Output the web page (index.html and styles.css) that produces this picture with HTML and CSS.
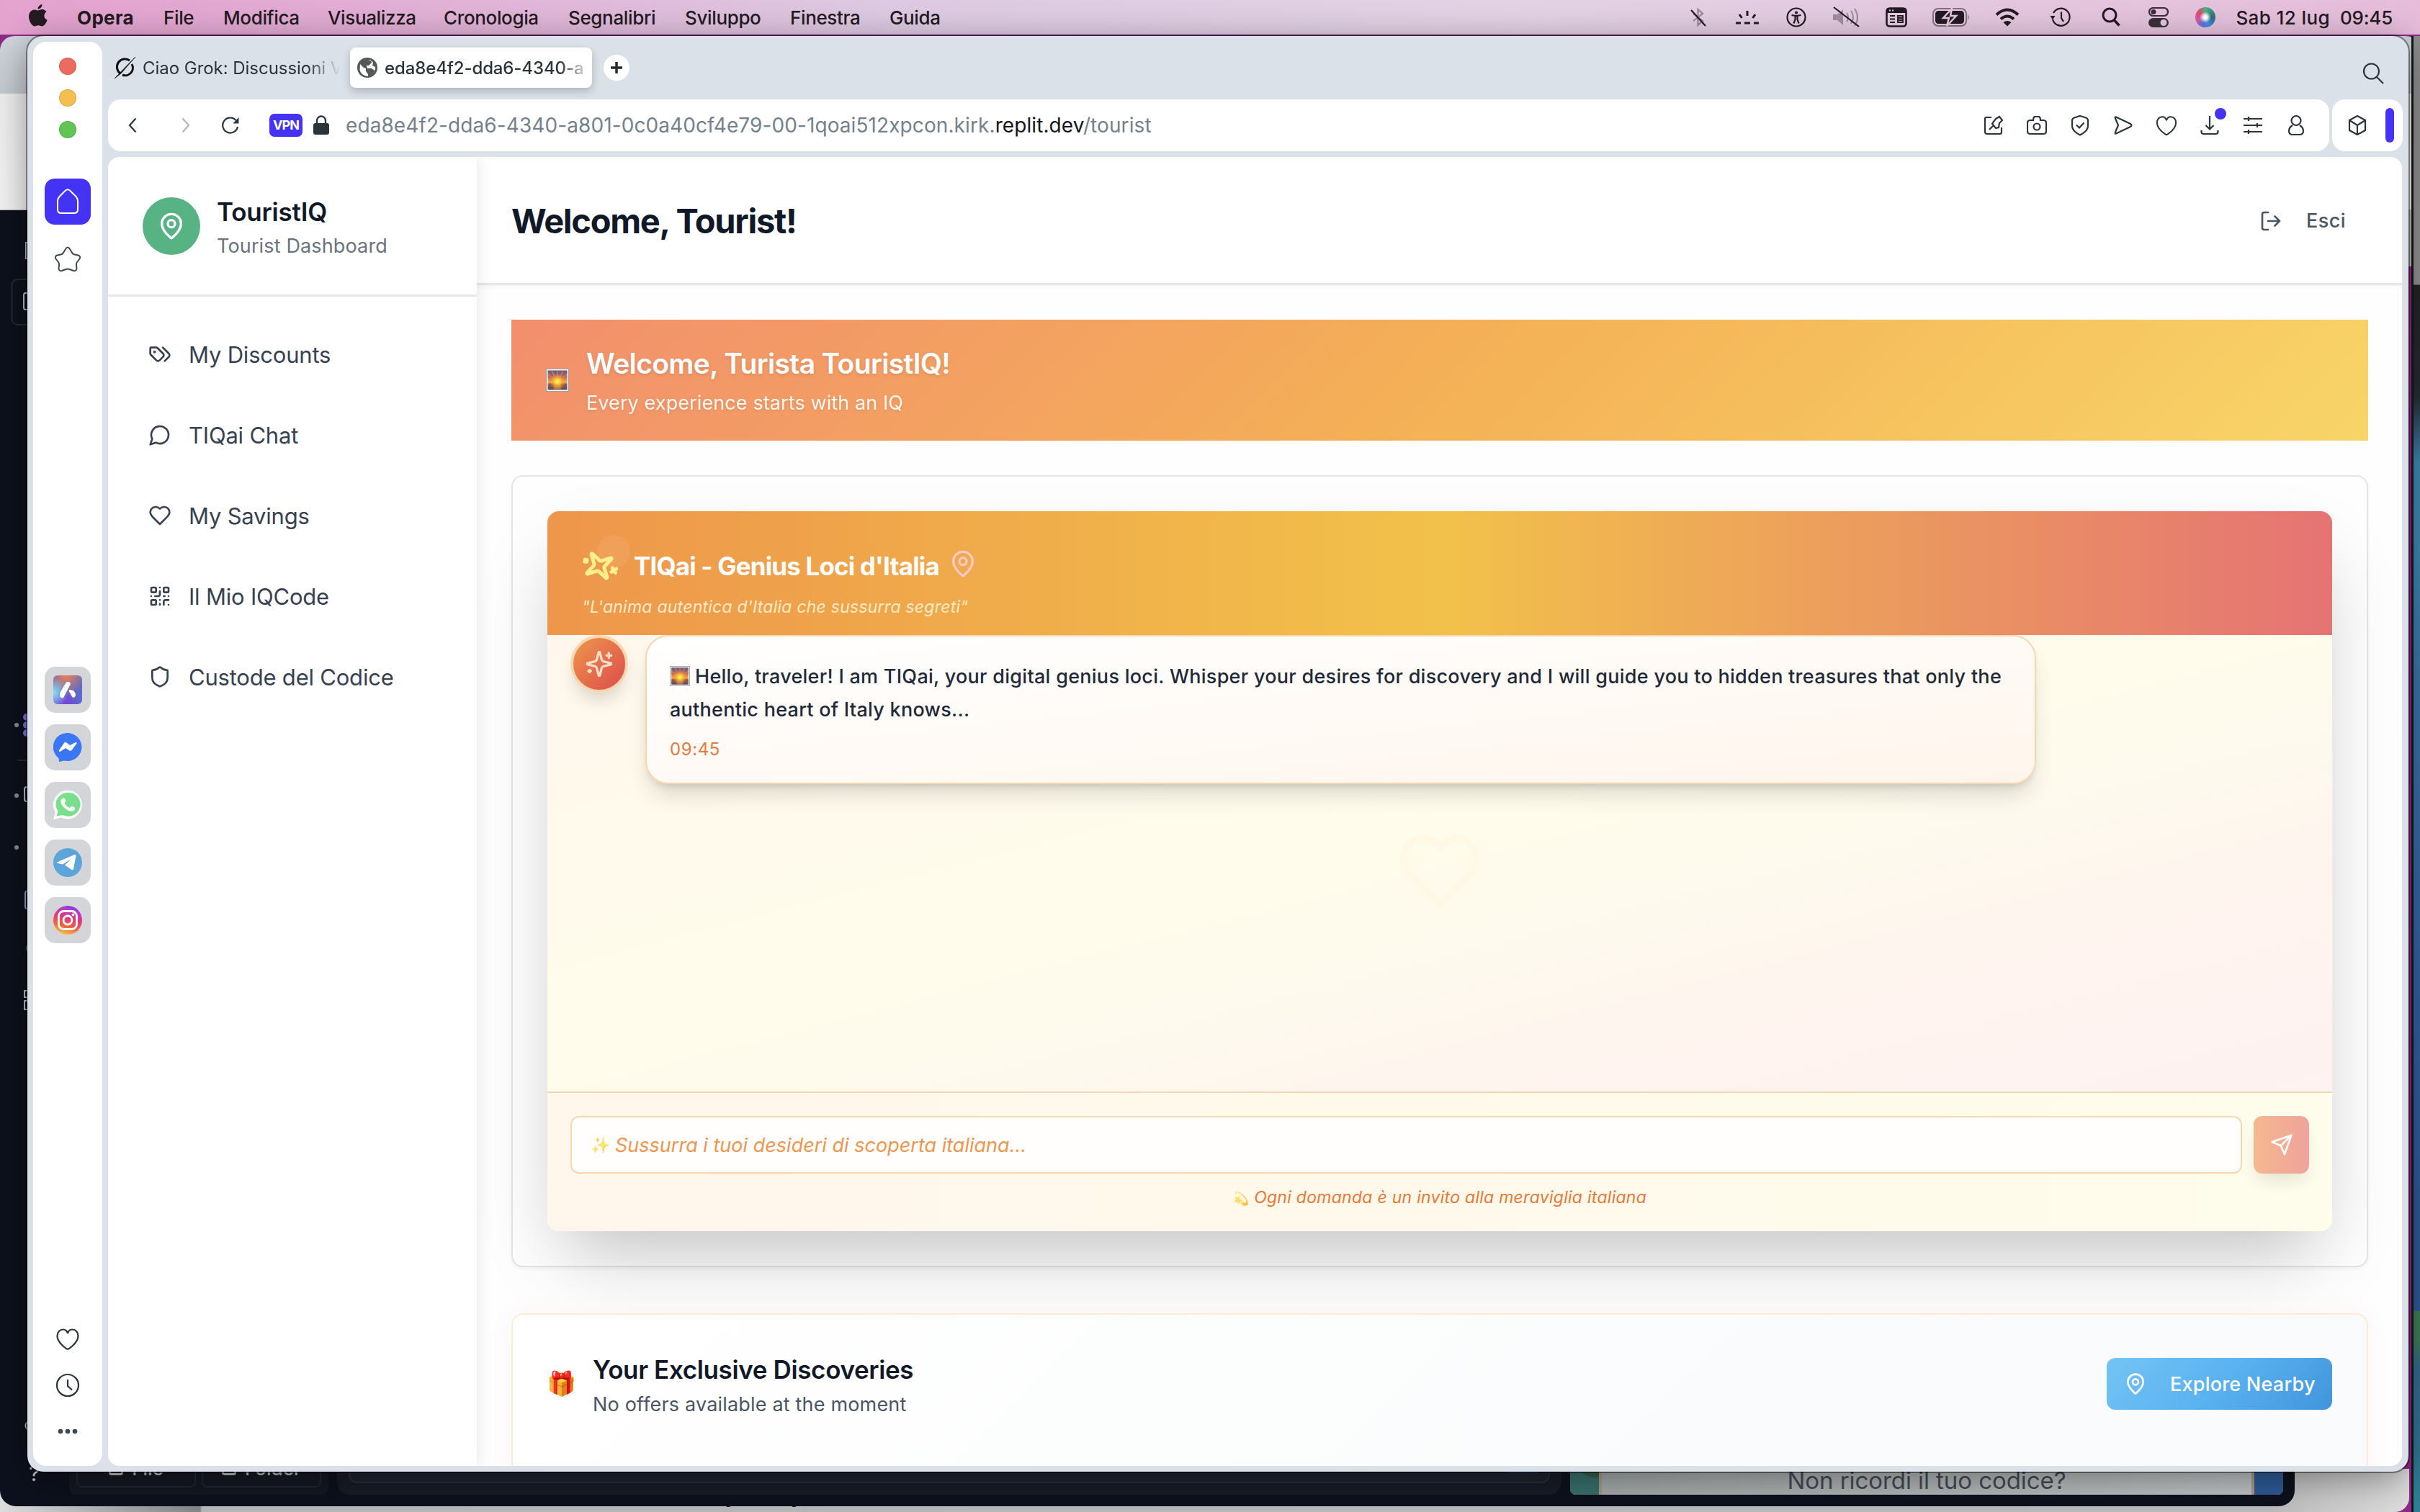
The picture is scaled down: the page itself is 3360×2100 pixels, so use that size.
FILE: index.html
```html
<!DOCTYPE html>
<html lang="it">
<head>
<meta charset="utf-8">
<title>TouristIQ</title>
<link rel="stylesheet" href="styles.css">
</head>
<body>
<svg class="defs" width="0" height="0">
  <defs>
    <symbol id="pin" viewBox="0 0 24 24"><path d="M20 10c0 4.99-5.54 10.19-7.4 11.8a1 1 0 0 1-1.2 0C9.54 20.19 4 14.99 4 10a8 8 0 0 1 16 0"/><circle cx="12" cy="10" r="3"/></symbol>
    <symbol id="heart" viewBox="0 0 24 24"><path d="M19 14c1.49-1.46 3-3.21 3-5.5A5.5 5.5 0 0 0 16.5 3c-1.76 0-3 .5-4.5 2-1.5-1.5-2.74-2-4.5-2A5.5 5.5 0 0 0 2 8.5c0 2.3 1.5 4.05 3 5.5l7 7Z"/></symbol>
    <symbol id="sparkles" viewBox="0 0 24 24"><path d="M9.937 15.5A2 2 0 0 0 8.5 14.063l-6.135-1.582a.5.5 0 0 1 0-.962L8.5 9.936A2 2 0 0 0 9.937 8.5l1.582-6.135a.5.5 0 0 1 .963 0L14.063 8.5A2 2 0 0 0 15.5 9.937l6.135 1.581a.5.5 0 0 1 0 .964L15.5 14.063a2 2 0 0 0-1.437 1.437l-1.582 6.135a.5.5 0 0 1-.963 0z"/><path d="M20 3v4M22 5h-4M4 17v2M5 18H3"/></symbol>
    <symbol id="opheart" viewBox="0 0 32 32"><path d="M16 8C15 4 12.500 2.500 9.500 2.500C5 2.500 1.500 6 1.500 11.500C1.500 18 8 25 14.500 29.300Q16 30.200 17.500 29.300C24 25 30.500 18 30.500 11.500C30.500 6 27 2.500 22.500 2.500C19.500 2.500 17 4 16 8z"/></symbol>
    <linearGradient id="sky" x1="0" y1="0" x2="0" y2="1"><stop offset="0" stop-color="#5d5a86"/><stop offset=".35" stop-color="#c0685a"/><stop offset=".6" stop-color="#f5a742"/><stop offset=".64" stop-color="#e39a3c"/><stop offset=".7" stop-color="#9a5a48"/><stop offset="1" stop-color="#5b4a58"/></linearGradient>
    <radialGradient id="sun" cx=".5" cy=".58" r=".42"><stop offset="0" stop-color="#fff46a"/><stop offset=".3" stop-color="#ffd63f" stop-opacity=".95"/><stop offset="1" stop-color="#f58c33" stop-opacity="0"/></radialGradient>
    <symbol id="sunrise" viewBox="0 0 32 32"><rect x=".5" y=".5" width="31" height="31" fill="#fff" stroke="#9aa0a4"/><rect x="2.500" y="2.500" width="27" height="27" fill="url(#sky)"/><path d="M16 18L3 8M16 18L8 3M16 18V3M16 18L24 3M16 18L29 8M16 18L3 14M16 18L29 14" stroke="#f0903c" stroke-width="1.200" opacity=".7"/><rect x="2.500" y="2.500" width="27" height="27" fill="url(#sun)"/><path d="M11 29.500V21h10v8.500z" fill="#f0a03c" opacity=".4"/></symbol>
    <linearGradient id="ig" x1=".3" y1="1" x2=".6" y2="0"><stop offset="0" stop-color="#fbc84c"/><stop offset=".3" stop-color="#f0663c"/><stop offset=".6" stop-color="#e0367c"/><stop offset=".85" stop-color="#b83ad0"/><stop offset="1" stop-color="#7a3cf0"/></linearGradient>
  </defs>
</svg>

<div class="desktop">
  <header class="menubar">
    <nav class="menus">
      <svg class="apple" width="26" height="32" viewBox="0 0 26 32"><path fill="#231a22" d="M18.500 0c.3 3-2.600 6.800-5.900 6.700C12.300 3.600 15.300.5 18.500 0zM13 8.600c1.200 0 3-1.500 5.700-1.500 2.400 0 4.600 1.300 5.900 3.200-4.800 2.900-4 9.500 1 11.500-1.200 3.600-4.200 8.700-7.300 8.700-2 0-2.700-1.200-5.100-1.200s-3.300 1.200-5.100 1.200C4.700 30.500 0 23.500 0 17.300 0 11 4 7.500 7.600 7.500c2.400 0 4 1.100 5.400 1.100z"/></svg>
      <b>Opera</b><span>File</span><span>Modifica</span><span>Visualizza</span><span>Cronologia</span><span>Segnalibri</span><span>Sviluppo</span><span>Finestra</span><span>Guida</span>
    </nav>
    <div class="status">
      <svg class="i" width="28" height="28" viewBox="0 0 28 28"><path d="M7 9l13 10-6.500 6V3L20 9 7 19" opacity=".4"/><path d="M4 4l20 22"/></svg>
      <svg class="i" width="34" height="28" viewBox="0 0 34 28"><path stroke-width="3" d="M1 22h7M13 22h8M26 22h7M17 5v7M6 10l3.500 5M28 10l-3.500 5"/></svg>
      <svg class="i" width="28" height="28" viewBox="0 0 28 28"><circle cx="14" cy="14" r="12.500"/><circle cx="14" cy="7.500" r="1" fill="#231a22"/><path d="M7.500 11l6.500 1.200 6.500-1.200M12.500 12v5l-2 5.500M15.500 12v5l2 5.500"/></svg>
      <svg class="i" width="38" height="30" viewBox="0 0 38 30"><path d="M1 11h6l8-7v22l-8-7H1z" fill="#231a22" stroke="none" opacity=".35"/><path d="M20 9q4 6 0 12M26 6q6 9 0 18M31 3q8 12 0 24" opacity=".35"/><path d="M2 1l35 27"/></svg>
      <svg width="30" height="28" viewBox="0 0 30 28"><rect x="1.500" y="1.500" width="27" height="25" rx="4" fill="none" stroke="#231a22" stroke-width="2.600"/><path d="M1 8V4q0-3 3-3h22q3 0 3 3v4z" fill="#231a22"/><path d="M6 12h7M6 16.500h7M6 21h7M17 12h7v9h-7zM17 15h7M17 18h7" fill="none" stroke="#231a22" stroke-width="1.800"/><path d="M5 4.500h2M9 4.500h2" stroke="#e5c8de" stroke-width="2"/></svg>
      <svg width="52" height="26" viewBox="0 0 52 26"><rect x="1" y="1" width="46" height="24" rx="7" fill="none" stroke="#231a22" stroke-width="2" opacity=".5"/><rect x="4" y="4" width="40" height="18" rx="4.500" fill="#231a22"/><path d="M49 9q3 4 0 8" fill="#231a22" opacity=".5"/><path d="M27 1L15 14h8l-3 11 13-14h-8z" fill="#231a22" stroke="#e5c8de" stroke-width="2.500"/></svg>
      <svg width="34" height="26" viewBox="0 0 34 26"><path d="M2 9.500q15-14 30 0M8 15.500q9-8 18 0" fill="none" stroke="#231a22" stroke-width="4"/><path d="M11.500 20q5.500-4 11 0L17 25.500z" fill="#231a22"/></svg>
      <svg class="i" width="30" height="28" viewBox="0 0 30 28"><path d="M4 17A12 12 0 1 0 5 8"/><path d="M16 6.500V15l3 5"/><path d="M.5 12h7L4 17.500z" fill="#231a22" stroke="none"/></svg>
      <svg class="i" width="28" height="28" viewBox="0 0 28 28"><circle cx="12" cy="11" r="9" stroke-width="3"/><path stroke-width="3.500" d="M18.500 18l7 7.500"/></svg>
      <svg width="28" height="28" viewBox="0 0 28 28"><rect x="1" y="1" width="26" height="11" rx="5.500" fill="none" stroke="#3b2f3a" stroke-width="2.200"/><circle cx="7" cy="6.500" r="3.500" fill="#3b2f3a"/><rect y="15" width="28" height="13" rx="6.500" fill="#3b2f3a"/><circle cx="21" cy="21.500" r="4.500" fill="#e5c8de"/></svg>
      <i class="siri"></i>
      <span>Sab 12 lug</span><span class="clock">09:45</span>
    </div>
  </header>

  <div class="behind"></div>
  <section class="ide">
    <svg class="ide-rail" width="38" height="1800" viewBox="0 0 38 1800" fill="none" stroke="#b9bcc4" stroke-width="2">
      <path d="M38 45h-2v22h2M38 115h-3q-2 0-2 3v17q0 3 2 3h3" /><rect x="16.500" y="96" width="40" height="63" rx="8" stroke="#262a38"/>
      <g fill="#8a8c94" stroke="none"><circle cx="23" cy="715" r="3"/><circle cx="23" cy="813" r="3"/><circle cx="23" cy="885" r="3"/></g>
      <g fill="#7a6fd0" stroke="none"><circle cx="37" cy="704" r="5"/><circle cx="37" cy="715" r="5"/><circle cx="37" cy="726" r="5"/></g>
      <path d="M24 764h14" stroke="#262a38"/><path d="M40 801h-3q-3 0-3 3v14q0 3 3 3h3"/><path d="M40 946h-3q-2 0-2 3v18q0 3 2 3h3" stroke="#86a0c8"/><circle cx="43" cy="1025" r="6" stroke="#4f9a5c"/><path d="M38 1084h-4v9h4M38 1098h-4v12h4M38 1683q-5 5 0 10"/>
    </svg>
    <div class="ide-foot">
      <span class="help">?</span>
      <div class="drop"><div class="drop-btn"><i></i>File</div><div class="drop-btn"><i></i>Folder</div></div>
      <div class="prompt"><div class="prompt-box"><i></i></div></div>
      <div class="preview"><i class="land"></i><p>Non ricordi il tuo codice?</p><i class="sea"></i></div>
    </div>
  </section>
  <div class="under"><span>(</span><span>)</span></div>
  <div class="edge"></div>

  <main class="opera">
    <aside class="rail">
      <div class="lights"><i class="red"></i><i class="yellow"></i><i class="green"></i></div>
      <div class="home"><svg width="32" height="36" viewBox="0 0 32 36"><path d="M2 17.500Q2 14 4.500 11L13 2.500q3-2.500 6 0L27.500 11Q30 14 30 17.500V29q0 5-5 5H7q-5 0-5-5z" fill="none" stroke="#fff" stroke-width="2"/></svg></div>
      <svg class="star" width="38" height="36" viewBox="0 0 38 36" fill="none" stroke="#3f484f" stroke-width="2"><path d="M16 4q3-5 6 0l3 5q1 2 3.500 2.500l5 1q4 1.500 2 5L32 22q-1.500 2-1 4l.5 5q-.5 4-4.500 3l-5.500-2q-2.500-1-5 0L11 34q-4 1-4.500-3l.5-5q.5-2-1-4l-3.500-4.500q-2-3.500 2-5l5-1Q12 11 13 9z"/></svg>
      <div class="apps">
        <div class="app"><i class="aria"><svg width="40" height="40" viewBox="0 0 40 40"><path d="M20 9q4 0 4 3L14 31q-2 2-5-2V25L17 11q1-2 3-2zM23 20q7 0 8 7 0 3-3 4-2 0-3-3-1-3-3-5-1-3 1-3z" fill="#fff"/></svg></i></div>
        <div class="app"><svg width="40" height="40" viewBox="0 0 40 40"><path d="M20 0a20 19.500 0 1 1-5 38.500L8 40l-.5-5A19.500 19.500 0 0 1 20 0z" fill="#3b76f6"/><path d="M8 24l7-10q1.500-2 3.500-.5L23 17l8-4q2-.5 1.500 1.500l-6.500 9q-1.500 2-3.500 1L17 21l-7.500 5q-2 .5-1.500-2z" fill="#fff"/></svg></div>
        <div class="app"><svg width="40" height="40" viewBox="0 0 40 40"><path d="M0 40l2.800-10A20 20 0 1 1 11 37.500z" fill="#fff"/><path d="M4.500 35.500l2-7A17 16.500 0 1 1 13 34z" fill="#78e08a"/><path d="M13 10.500q3-1 4 2.500.8 2-.8 3.500-1 1 .3 2.500 2.500 3.500 5.500 4.800 1.200.4 2.200-1 1-1.600 3-.6 3 1.200 3 2 0 3.800-4.500 4.600Q20 29 14 22.500 7 14 13 10.500z" fill="#fff"/></svg></div>
        <div class="app"><svg width="40" height="40" viewBox="0 0 40 40"><circle cx="20" cy="20" r="20" fill="#5ca5da"/><path d="M5 19.500L29.500 9q2-.5 2 1.500L28 29q-.5 2-2.500 1L16 23.500 25 15l-12 7.500-7-1.500q-2-.7-1-1.500z" fill="#fff"/></svg></div>
        <div class="app"><svg width="40" height="40" viewBox="0 0 40 40"><circle cx="20" cy="20" r="20" fill="url(#ig)"/><g fill="none" stroke="#fff" stroke-width="2.800"><rect x="7.500" y="7.500" width="25" height="25" rx="7"/><circle cx="20" cy="20" r="6"/></g><circle cx="27.500" cy="12.500" r="1.900" fill="#fff"/></svg></div>
      </div>
      <div class="rail-foot">
        <svg class="o" width="34" height="32"><use href="#opheart"/></svg>
        <svg class="o" width="34" height="34" viewBox="0 0 34 34"><circle cx="17" cy="17" r="15"/><path d="M17 9v9l6 5.500"/></svg>
        <svg width="28" height="8" viewBox="0 0 28 8" fill="#3f484f"><circle cx="4" cy="4" r="3.300"/><circle cx="14" cy="4" r="3.300"/><circle cx="24" cy="4" r="3.300"/></svg>
      </div>
    </aside>

    <div class="browser">
      <div class="tabs">
        <div class="tab"><svg width="32" height="32" viewBox="0 0 32 32" fill="none" stroke="#111" stroke-width="3"><path d="M9 24A10.500 10.500 0 0 1 22 6M25 11a10.500 10.500 0 0 1-13 15"/><path d="M1 31L30 1 10 24z" fill="#111" stroke-width=".8"/></svg><span>Ciao Grok: Discussioni Varie</span></div>
        <div class="tab active"><svg width="28" height="28" viewBox="0 0 28 28"><circle cx="14" cy="14" r="14" fill="#54585b"/><path d="M4 9l5 5 3 1v4l3 4v3Q5 25 3.500 17zM13 3h6l1 4-4 4h-3l1 4h6l4 3-2 4q4-6 3-9l-4-2 1-4Q20 3 13 3z" fill="#fff"/></svg><span>eda8e4f2-dda6-4340-a801</span></div>
        <div class="newtab"><svg width="18" height="18" viewBox="0 0 18 18"><path d="M9 1v16M1 9h16" stroke="#222a30" stroke-width="3.500"/></svg></div>
        <svg class="tabsearch o" width="30" height="30" viewBox="0 0 30 30"><circle cx="12.500" cy="12" r="10.500"/><path d="M20 20l9 9"/></svg>
      </div>
      <div class="bar">
        <div class="address">
          <svg class="o back" width="12" height="22" viewBox="0 0 12 22"><path d="M10.500 1.500L2 11l8.500 9.500"/></svg>
          <svg class="o fwd" width="12" height="22" viewBox="0 0 12 22"><path d="M1.500 1.500L10 11l-8.500 9.500"/></svg>
          <svg class="o" width="26" height="24" viewBox="0 0 26 24"><path d="M23 14a10.500 10.500 0 1 1-3-9.500L23 7"/><path d="M24.500 1v8.500h-8z" fill="#2b3439" stroke="none"/></svg>
          <b class="vpn">VPN</b>
          <svg width="22" height="28" viewBox="0 0 22 28"><rect y="11" width="22" height="16" rx="3" fill="#2b3439"/><path d="M5 12V7.500a6 6 0 0 1 12 0V12" fill="none" stroke="#2b3439" stroke-width="2.400"/></svg>
          <p class="url">eda8e4f2-dda6-4340-a801-0c0a40cf4e79-00-1qoai512xpcon.kirk.<span>replit.dev</span>/tourist</p>
          <div class="tools">
            <svg class="o" width="28" height="28" viewBox="0 0 28 28"><path d="M11 3H4Q2 3 2 5v18q0 3 3 3h18q2 0 2-3v-6"/><path d="M8 20l5-5M17 5l5-3 4 5-4 4-1 6-4 1-5-6 2-3z"/></svg>
            <svg class="o" width="28" height="28" viewBox="0 0 28 28"><path d="M9 7q0-4 2-5h6q2 1 2 5h4q4 0 4 4v11q0 4-4 4H5q-4 0-4-4V11q0-4 4-4z"/><circle cx="14" cy="16" r="4.500"/></svg>
            <svg class="o" width="28" height="30" viewBox="0 0 28 30"><path d="M14 2l8 2.500q3 1 3 4V16q0 7-11 12.500Q3 23 3 16V8.500q0-3 3-4z"/><path d="M9 14.500l4 4 6.500-7"/></svg>
            <svg class="o" width="28" height="28" viewBox="0 0 28 28"><path d="M4 2.500l20 9.500q3 2 0 4L4 25.500q-2 .5-1-2L7 14 3 4.500q-1-2.500 1-2z"/></svg>
            <svg class="o" width="30" height="29"><use href="#opheart"/></svg>
            <div class="dl"><svg class="o" width="28" height="28" viewBox="0 0 28 28"><path d="M14 1v18M8.500 14l5.500 5.500 5.500-5.500M2.500 21v2q0 3 3 3h17q3 0 3-3v-2"/></svg><i></i></div>
            <svg class="o" width="28" height="28" viewBox="0 0 28 28"><path d="M1 5h26M1 14h26M1 23h26M8 2v6M20 11v6M8 20v6"/></svg>
            <svg class="o" width="28" height="30" viewBox="0 0 28 30"><circle cx="14" cy="8.500" r="6.500"/><path d="M9 15q-5 3-5 8 0 4 4 5h12q4-1 4-5 0-5-5-8"/></svg>
          </div>
        </div>
        <div class="ext"><svg class="o" width="26" height="30" viewBox="0 0 26 30"><path d="M13 2l11 6v14l-11 6-11-6V8zM2 8l11 7 11-7M13 15v13"/></svg><i></i></div>
      </div>

      <div class="page">
        <aside class="side">
          <div class="brand">
            <div class="logo"><svg class="l" width="40" height="40"><use href="#pin"/></svg></div>
            <div><h2>TouristIQ</h2><p>Tourist Dashboard</p></div>
          </div>
          <nav class="nav">
            <a><svg class="l" width="32" height="32" viewBox="0 0 24 24"><path d="m15 5 6.300 6.300a2.400 2.400 0 0 1 0 3.400L17 19"/><path d="M9.586 5.586A2 2 0 0 0 8.172 5H3a1 1 0 0 0-1 1v5.172a2 2 0 0 0 .586 1.414L8.290 18.290a2.426 2.426 0 0 0 3.420 0l3.580-3.580a2.426 2.426 0 0 0 0-3.420z"/><circle cx="6.500" cy="9.500" r=".5" fill="currentColor"/></svg>My Discounts</a>
            <a><svg class="l" width="32" height="32" viewBox="0 0 24 24"><path d="M7.900 20A9 9 0 1 0 4 16.100L2 22Z"/></svg>TIQai Chat</a>
            <a><svg class="l" width="32" height="32"><use href="#heart"/></svg>My Savings</a>
            <a><svg class="l" width="32" height="32" viewBox="0 0 24 24"><rect width="5" height="5" x="3" y="3" rx="1"/><rect width="5" height="5" x="16" y="3" rx="1"/><rect width="5" height="5" x="3" y="16" rx="1"/><path d="M21 16h-3a2 2 0 0 0-2 2v3M21 21v.01M12 7v3a2 2 0 0 1-2 2H7M3 12h.01M12 3h.01M12 16v.01M16 12h1M21 12v.01M12 21v-1"/></svg>Il Mio IQCode</a>
            <a><svg class="l" width="32" height="32" viewBox="0 0 24 24"><path d="M20 13c0 5-3.500 7.500-7.660 8.950a1 1 0 0 1-.67-.01C7.500 20.500 4 18 4 13V6a1 1 0 0 1 1-1c2 0 4.500-1.200 6.240-2.720a1.170 1.170 0 0 1 1.520 0C14.510 3.810 17 5 19 5a1 1 0 0 1 1 1z"/></svg>Custode del Codice</a>
          </nav>
        </aside>
        <div class="content">
          <header class="top"><h1>Welcome, Tourist!</h1><a><svg class="l" width="32" height="32" viewBox="0 0 24 24"><path d="M9 21H5a2 2 0 0 1-2-2V5a2 2 0 0 1 2-2h4M16 17l5-5-5-5M21 12H9"/></svg>Esci</a></header>
          <div class="body">
            <section class="banner"><svg width="32" height="32"><use href="#sunrise"/></svg><div><h2>Welcome, Turista TouristIQ!</h2><p>Every experience starts with an IQ</p></div></section>
            <section class="card">
              <div class="chat">
                <header class="chat-head">
                  <i class="bubble"></i>
                  <h3><svg class="l spin" width="48" height="48"><use href="#sparkles"/></svg><span>TIQai - Genius Loci d'Italia</span><svg class="l headpin" width="40" height="40"><use href="#pin"/></svg></h3>
                  <p>"L'anima autentica d'Italia che sussurra segreti"</p>
                </header>
                <div class="log">
                  <div class="msg">
                    <div class="avatar"><svg class="l" width="40" height="40"><use href="#sparkles"/></svg></div>
                    <div class="balloon"><p><svg width="28" height="28"><use href="#sunrise"/></svg>Hello, traveler! I am TIQai, your digital genius loci. Whisper your desires for discovery and I will guide you to hidden treasures that only the<br>authentic heart of Italy knows...</p><time>09:45</time></div>
                  </div>
                  <svg class="l ghost" width="122" height="122"><use href="#heart"/></svg>
                </div>
                <footer class="compose">
                  <div class="row"><div class="field"><span>✨</span>Sussurra i tuoi desideri di scoperta italiana...</div><div class="send"><svg class="l" width="32" height="32" viewBox="0 0 24 24"><path d="m22 2-7 20-4-9-9-4ZM22 2 11 13"/></svg></div></div>
                  <p><span>💫</span>Ogni domanda è un invito alla meraviglia italiana</p>
                </footer>
              </div>
            </section>
            <section class="offers">
              <span class="gift">🎁</span>
              <div><h3>Your Exclusive Discoveries</h3><p>No offers available at the moment</p></div>
              <div class="explore"><svg class="l" width="32" height="32"><use href="#pin"/></svg>Explore Nearby</div>
            </section>
          </div>
        </div>
      </div>
    </div>
  </main>
</div>
</body>
</html>
```
FILE: styles.css
```css
* { box-sizing: border-box; margin: 0; padding: 0; }
body { width: 3360px; height: 2100px; overflow: hidden; font-family: "Inter", "Liberation Sans", sans-serif; }
i { font-style: normal; }
svg { flex: none; display: block; }
.defs { position: absolute; }
.i { fill: none; stroke: #231a22; stroke-width: 2.2; }
.o { fill: none; stroke: #2b3439; stroke-width: 2.2; }
.l { fill: none; stroke: currentColor; stroke-width: 2; stroke-linecap: round; stroke-linejoin: round; overflow: visible; }

.desktop { position: relative; width: 3360px; height: 2100px; overflow: hidden; background: #8d2a86; }

/* macOS menu bar */
.menubar { height: 48px; padding: 0 38px 0 40px; display: flex; justify-content: space-between; background: linear-gradient(90deg, #e4a2cf 0, #e2add4 500px, #ddcae2 1250px, #e2d2e4 2100px, #e4c6de 2850px, #e6bcda 100%); color: #231a22; font-size: 26px; font-weight: 500; line-height: 45px; letter-spacing: -.36px; white-space: nowrap; }
.menus { display: grid; grid-template-columns: 67px 120px 83px 145px 161px 173px 162px 146px 138px 100px; align-items: center; }
.menus b { font-weight: 700; letter-spacing: .35px; }
.apple { margin-bottom: 5px; }
.status { display: grid; grid-template-columns: 68px 68px 68px 69px 72px 80px 76px 72px 68px 64px 66px 140px 87px; align-items: center; justify-items: center; }
.status span { letter-spacing: .4px; justify-self: end; }
.status .clock { letter-spacing: -.24px; }
.siri { width: 28px; height: 28px; border-radius: 50%; background: radial-gradient(circle, #fff 0 12%, transparent 40%), conic-gradient(#4fae86, #2d6f7c 90deg, #3e8fe6 160deg, #5d6fd6 200deg, #d05fae 250deg, #e0486e 310deg, #4fae86); }

/* windows behind */
.behind { position: absolute; left: 0; top: 50px; width: 3360px; height: 320px; border-radius: 20px 20px 0 0; background: linear-gradient(#d0d6dc 0, #c3cad0 80px, #eee 80px, #f3f3f3 240px, #bbb 242px); }
.ide { position: absolute; left: 0; top: 292px; width: 3186px; height: 1800px; background: #0d111d; border-radius: 0 0 22px 22px; overflow: hidden; display: flex; flex-direction: column; justify-content: flex-end; z-index: 1; }
.ide-rail { position: absolute; left: 0; top: 0; }
.ide-foot { display: flex; align-items: flex-start; height: 62px; }
.help { width: 96px; padding-left: 40px; color: #c8cacf; font-size: 30px; line-height: 32px; }
.drop { width: 360px; height: 46px; margin-right: 12px; padding: 0 10px; display: grid; grid-template-columns: 1fr 1fr; gap: 8px; background: #141821; border-radius: 0 0 10px 10px; }
.drop-btn { height: 36px; border: 2px solid #232734; border-top: 0; border-radius: 0 0 8px 8px; display: flex; align-items: flex-start; justify-content: center; gap: 12px; color: #b9bcc3; font-size: 26px; font-weight: 500; line-height: 20px; }
.drop-btn i { width: 20px; height: 19px; border: 3px solid #b9bcc3; border-radius: 4px; }
.prompt { width: 1700px; height: 46px; padding: 0 16px; margin-right: 12px; background: #181c26; border-radius: 0 0 18px 18px; }
.prompt-box { height: 30px; border: 2px solid #2b2f3e; border-top: 0; border-radius: 0 0 12px 12px; background: #1e222d; padding-left: 1608px; }
.prompt-box i { display: block; width: 42px; height: 16px; background: #1b3a6e; }
.preview { width: 990px; height: 46px; display: flex; background: linear-gradient(90deg, #a3a8a8, #c0c4c6); border-radius: 0 0 8px 8px; overflow: hidden; color: #454b57; }
.preview p { flex: 1; text-align: center; font-size: 33px; line-height: 52px; white-space: nowrap; letter-spacing: -.07px; }
.land { width: 44px; background: radial-gradient(circle at 34px 0, #345f4c 22px, #38706c 23px); border-right: 4px solid #a89a86; }
.sea { width: 44px; background: #2e5a96; border-left: 4px solid #a89a86; }
.under { position: absolute; left: 0; bottom: 0; width: 3345px; height: 60px; border-radius: 0 0 20px 0; background: linear-gradient(90deg, #dcdcdc 0, #858585 278px, #b8b8b8 280px, #bbb 3150px, #dedede); display: flex; gap: 84px; padding: 16px 0 0 1002px; font-size: 34px; font-weight: 700; line-height: 40px; color: #16181c; }
.edge { position: absolute; right: 0; top: 50px; width: 12px; height: 2050px; border-left: 3px solid #15171b; background: linear-gradient(#8d8d8d 0, #8f8f8f 345px, #222 346px, #262b33 500px, #3d84ad 590px, #3f86ad 690px, #3a72a6 900px, #32609f 1300px, #2f5796 1600px, #2f5796 1770px, #3d7a55 1771px, #3d7a55 1810px, #34688c 1850px, #2f7f93 2050px); }

/* Opera window */
.opera { position: absolute; z-index: 2; left: 38px; top: 50px; width: 3306px; height: 1994px; border-radius: 22px; background: #dae1e9; box-shadow: 0 0 0 2px #0006, 0 10px 50px #0006; padding: 8px; display: flex; gap: 8px; }
.rail { width: 96px; height: 1978px; background: #fff; border-radius: 18px; display: flex; flex-direction: column; align-items: center; padding: 22px 0 44px; }
.lights { display: grid; gap: 20px; margin-bottom: 56px; }
.lights i { width: 24px; height: 24px; border-radius: 50%; border: 1px solid #0002; }
.red { background: #ed6a5e; } .yellow { background: #f4bf4f; } .green { background: #61c554; }
.home { width: 64px; height: 64px; border-radius: 14px; background: #4432f5; display: grid; place-items: center; }
.star { margin-top: 30px; }
.apps { margin-top: 548px; display: grid; gap: 16px; }
.app { width: 64px; height: 64px; border-radius: 15px; background: #d4d5d9; display: grid; place-items: center; }
.aria { width: 40px; height: 40px; border-radius: 6px; background: radial-gradient(circle at 0 60%, #8fe0f4, transparent 45%), radial-gradient(circle at 45% 0, #ee8050, transparent 60%), radial-gradient(circle at 40% 100%, #7a40dc, transparent 50%), #5b6cc8; }
.rail-foot { margin-top: auto; display: flex; flex-direction: column; align-items: center; gap: 31px; }
.rail-foot svg:last-child { margin-top: 12px; }

.browser { flex: 1; display: flex; flex-direction: column; }
.tabs { height: 80px; display: flex; align-items: flex-start; padding: 8px 26px 0 0; }
.tab { height: 56px; display: flex; align-items: center; gap: 8px; width: 328px; padding-left: 8px; margin-right: 8px; color: #2b3439; font-size: 24px; letter-spacing: -.04px; white-space: nowrap; overflow: hidden; }
.tab span { overflow: hidden; flex: 1; -webkit-mask-image: linear-gradient(90deg, #000 82%, transparent 98%); }
.tab.active { width: 336px; padding: 0 12px 0 10px; gap: 10px; background: #fff; border-radius: 8px; box-shadow: 0 5px 12px #0003; font-weight: 500; margin-right: 16px; overflow: visible; }
.tab.active span { letter-spacing: -.12px; -webkit-mask-image: linear-gradient(90deg, #000 88%, transparent 104%); }
.newtab { width: 36px; height: 36px; margin-top: 10px; border-radius: 50%; background: #fff; display: grid; place-items: center; }
.tabsearch { margin: 21px 0 0 auto; }
.bar { display: flex; gap: 4px; height: 72px; margin-bottom: 8px; }
.address { flex: 1; background: #fff; border-radius: 18px; display: flex; align-items: center; padding: 0 32px 0 28px; }
.fwd { margin: 0 43px 0 62px; opacity: .35; }
.vpn { width: 46px; height: 32px; margin: 0 15px 0 41px; border-radius: 7px; background: #4432f5; color: #fff; font-size: 18px; font-weight: 700; line-height: 32px; text-align: center; letter-spacing: -1px; }
.url { margin-left: 23px; font-size: 28px; letter-spacing: .09px; color: #74818c; white-space: nowrap; }
.url span { color: #111518; }
.tools { margin-left: auto; display: grid; grid-template-columns: repeat(8, 60px); margin-right: -16px; align-items: center; justify-items: center; }
.dl { position: relative; }
.dl i { position: absolute; left: 21px; top: -10px; width: 16px; height: 16px; border-radius: 50%; background: #4432f5; }
.ext { width: 98px; background: #fff; border-radius: 18px; display: flex; align-items: center; justify-content: space-between; padding: 0 12px 0 22px; }
.ext i { width: 12px; height: 48px; border-radius: 6px; background: #4432f5; }

/* Dashboard page */
.page { height: 1818px; width: 3185px; border-radius: 16px; background: #fefefe; overflow: hidden; display: flex; }
.side { width: 512px; flex: none; background: #fff; box-shadow: 0 0 22px #0000001c; z-index: 1; color: #111827; }
.brand { height: 194px; padding: 0 48px; display: flex; align-items: center; gap: 23px; border-bottom: 3px solid #e5e7eb; }
.logo { width: 80px; height: 80px; border-radius: 50%; background: #58b384; color: #fff; display: grid; place-items: center; }
.brand h2 { margin-top: 6px; font-size: 35px; font-weight: 600; line-height: 48px; letter-spacing: -.21px; }
.brand p { margin-top: 2px; font-size: 27px; line-height: 44px; letter-spacing: .14px; color: #6b7280; }
.nav { padding: 24px 56px 0; }
.nav a { height: 112px; display: flex; align-items: center; gap: 24px; color: #374151; font-size: 31px; letter-spacing: -.21px; }
.content { flex: 1; min-width: 0; }
.top { height: 178px; border-bottom: 3px solid #e5e7eb; background: #fff; box-shadow: 0 2px 6px #0000000c; display: flex; align-items: center; justify-content: space-between; padding: 2px 78px 0 48px; }
.top h1 { color: #111827; font-size: 47px; font-weight: 700; letter-spacing: -1.28px; }
.top a { display: flex; align-items: center; gap: 33px; color: #4b5563; font-size: 27px; font-weight: 500; letter-spacing: .45px; }
.body { padding: 48px 47px 0 48px; }
.banner { height: 168px; padding-left: 48px; display: flex; align-items: center; gap: 24px; background: linear-gradient(135deg, #f28f6e 0%, #f4b056 50%, #f8d568 100%); color: #fff; }
.banner h2 { margin-top: 2px; font-size: 39px; font-weight: 600; line-height: 56px; letter-spacing: -.65px; text-shadow: 0 2px 4px #0000001a; }
.banner p { font-size: 27px; line-height: 44px; margin-top: 5px; letter-spacing: .1px; opacity: .92; text-shadow: 0 2px 4px #0000001a; }
.card { margin-top: 48px; height: 1100px; border: 2px solid #e5e5e7; border-radius: 16px; padding: 48px; box-shadow: 0 2px 4px #0000000d; }
.chat { height: 1000px; border-radius: 16px; box-shadow: 0 50px 100px -24px #00000040; display: flex; flex-direction: column; background: #fff; }
.chat-head { position: relative; height: 172px; border-radius: 16px 16px 0 0; padding: 50px 48px 0; background: linear-gradient(90deg, #ee964b, #f2c14a 50%, #e57373); color: #fff; }
.bubble { position: absolute; left: 69px; top: 33px; width: 46px; height: 46px; border-radius: 50%; background: #ffffff14; }
.chat-head h3 { display: flex; align-items: center; font-size: 35px; font-weight: 700; letter-spacing: -.85px; height: 52px; position: relative; }
.chat-head h3 span { margin: 0 13px 0 24px; }
.spin { color: #fdf08c; transform: rotate(58deg); stroke-width: 2.5; }
.headpin { color: #f6c9c4; margin: -7px 0 0 -15px; }
.chat-head h3 span + svg { margin-left: 0; width: 40px; }
.chat-head p { font-size: 23px; font-style: italic; line-height: 32px; margin-top: 15px; letter-spacing: .24px; color: #fdebc8; }
.log { position: relative; height: 634px; background: linear-gradient(to bottom right, #fff7ed, #fffceb 45%, #fdf9ed 62%, #fff4ef 78%, #fef2f2); padding: 0 32px; }
.msg { display: flex; gap: 24px; }
.avatar { width: 80px; height: 80px; border-radius: 50%; border: 4px solid #f8d7ae; background: linear-gradient(135deg, #ee964b, #dc4c4c); color: #fbdcc8; display: grid; place-items: center; box-shadow: 0 16px 24px -6px #00000026; }
.balloon { width: 1931px; height: 207px; border: 2px solid #f8d7ae; border-radius: 32px; padding: 33px 30px 0 32px; background: linear-gradient(to bottom right, #fff, #fff5ec); box-shadow: 0 20px 30px -6px #00000024, 0 6px 10px -4px #00000020; }
.balloon p { font-size: 27px; font-weight: 500; line-height: 46px; letter-spacing: .272px; color: #1f2937; white-space: nowrap; }
.balloon p svg { display: inline-block; vertical-align: -4px; margin-right: 7px; }
.balloon time { display: block; margin-top: 16px; font-size: 24px; line-height: 32px; letter-spacing: .6px; color: #e8793c; }
.ghost { position: absolute; left: 1178px; top: 268px; color: #fff8e4; }
.compose { height: 194px; border-top: 2px solid #f8d7ae; border-radius: 0 0 16px 16px; padding: 32px 32px 0; background: linear-gradient(90deg, #fff6ec, #fefcea); }
.row { display: flex; gap: 16px; height: 80px; }
.field { flex: 1; border: 2px solid #f8d7ae; border-radius: 12px; background: #fffefc; padding-left: 26px; display: flex; align-items: center; color: #ee9650; font-size: 27px; font-style: italic; letter-spacing: .01px; }
.field span { font-size: 22px; margin-right: 7px; opacity: .7; font-style: normal; }
.send { width: 77px; border-radius: 12px; background: linear-gradient(90deg, #f5b88e, #efa39c); color: #fff; display: grid; place-items: center; box-shadow: 0 14px 24px -6px #0000001c; }
.compose p { margin-top: 16px; text-align: center; font-size: 23px; line-height: 34px; font-style: italic; letter-spacing: .27px; color: #ea7836; }
.compose p span { font-size: 18px; margin-right: 7px; opacity: .75; font-style: normal; }
.offers { margin-top: 64px; height: 300px; border: 2px solid #fdebd6; border-radius: 16px; padding: 58px 48px 0; display: flex; align-items: flex-start; background: linear-gradient(135deg, #fff, #f8fafb); box-shadow: 0 0 30px #f28f6e14; }
.gift { width: 40px; margin: 14px 24px 0 -1px; font-size: 33px; line-height: 46px; }
.offers h3 { margin-top: -4px; font-size: 35px; font-weight: 600; line-height: 44px; letter-spacing: -.37px; color: #111827; }
.offers p { font-size: 27px; line-height: 40px; margin-top: 7px; letter-spacing: .18px; color: #4b5563; }
.explore { margin: 2px 0 0 auto; width: 313px; height: 72px; border-radius: 12px; padding: 0 0 0 24px; display: flex; align-items: center; gap: 32px; background: linear-gradient(135deg, #74c4f5, #5ab2f0 50%, #4194dc); color: #fff; font-size: 27px; font-weight: 500; letter-spacing: .22px; }
```
